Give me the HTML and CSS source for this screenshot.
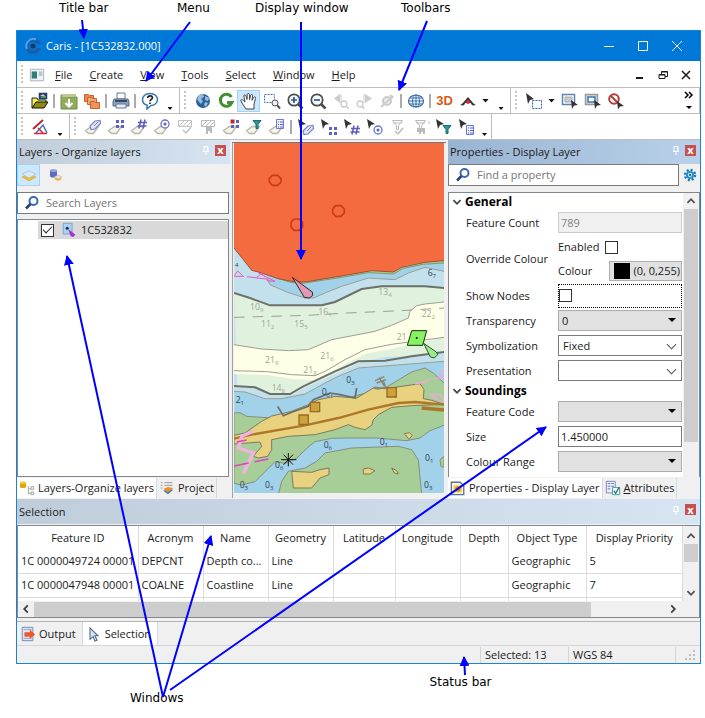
FILE: index.html
```html
<!DOCTYPE html>
<html lang="en">
<head>
    <meta charset="UTF-8">
    <meta name="viewport" content="width=device-width, initial-scale=1.0">
    <title>Caris - [1C532832.000]</title>
    <link rel="stylesheet" href="styles.css">
</head>
<body>
  <!-- icon sprite -->
  <svg class="sprite">
    <symbol id="i-logo" viewBox="0 0 18 18"><circle cx="9" cy="9" r="6" fill="none" stroke="#1c5fa6" stroke-width="4"/><path d="M3 12A7 7 0 0 1 12 2.500" fill="none" stroke="#4aa5ec" stroke-width="2"/><circle cx="9" cy="9" r="2.500" fill="#0e3c6c"/><path d="M13 7h5v4h-5z" fill="#0078d7"/></symbol>
    <symbol id="i-doc" viewBox="0 0 18 18"><path d="M1.500 2.500h15v13h-15z" fill="#eef3f4" stroke="#a3adb1"/><path d="M3 5h6v8H3z" fill="#2f7f78"/><path d="M11 5h4v5h-4z" fill="#b8c6cc"/></symbol>
    <symbol id="i-open" viewBox="0 0 18 18"><path d="M1 16V6h5l1 2h8v3" fill="#f5ee5c" stroke="#222"/><path d="M1 16l4-6h12l-4 6z" fill="#8d8b13" stroke="#111"/><path d="M8 1h8v6H8z" fill="#1736b5" stroke="#333" stroke-width=".5"/><path d="M9 4l3-2 3 3" fill="#e9e335"/><path d="M9 6h6V5l-3-1z" fill="#38a838"/></symbol>
    <symbol id="i-down" viewBox="0 0 18 18"><path d="M1 3h6l1 2h9v12H1z" fill="#91ad5c" stroke="#728b45"/><path d="M2 2h14v3H2z" fill="#b9c894"/><path d="M9 7v7M5.500 11L9 14.500 12.500 11" fill="none" stroke="#fff" stroke-width="2"/></symbol>
    <symbol id="i-folders" viewBox="0 0 18 18"><path d="M1.500 2.500h4l1 1h4v6h-9z" fill="#e98b52" stroke="#c9632c"/><path d="M4.500 5.500h4l1 1h4v6h-9z" fill="#f0a878" stroke="#c9632c"/><path d="M7.500 9.500h4l1 1h4v6h-9z" fill="#ee955d" stroke="#c9632c"/></symbol>
    <symbol id="i-print" viewBox="0 0 18 18"><path d="M5 1h8v6H5z" fill="#fff" stroke="#607894"/><path d="M2 7h14l1 3v4H1v-4z" fill="#8da2ba" stroke="#536b87"/><path d="M3 9h12" stroke="#354d69" stroke-width="2"/><path d="M4 12h10v4H4z" fill="#e6edf3" stroke="#607894"/></symbol>
    <symbol id="i-help" viewBox="0 0 18 18"><path d="M9 1.500c4.500 0 7.500 2.600 7.500 6S13.500 13.500 10 13.500L6 17v-4C3 12.500 1.500 10.300 1.500 7.500c0-3.400 3-6 7.500-6z" fill="#fff" stroke="#3878ac" stroke-width="1.500"/><path d="M6.800 6c0-3 4.600-2.800 4.600-.3C11.400 7.400 9 7.300 9 9.300M9 10.500V12" fill="none" stroke="#222" stroke-width="1.700"/></symbol>
    <symbol id="i-earth" viewBox="0 0 18 18"><circle cx="9" cy="9" r="7" fill="#2c629c"/><path d="M5 3l4-1 1 3-3 2 2 2-2 3-2-2-2-3zM11 4l4 2-1 3-3-1zM11 10l3 1-2 4-2-2z" fill="#9bbcdb"/></symbol>
    <symbol id="i-redo" viewBox="0 0 18 18"><path d="M14.500 5A6 6 0 1 0 15 10.500H10" fill="none" stroke="#3f9131" stroke-width="3"/></symbol>
    <symbol id="i-hand" viewBox="0 0 18 18"><path d="M6 17L2 11 .8 8.500c0-1.500 2-1 2.500 0L5 10 3.800 4c0-1.500 1.800-1.500 2.200 0L7 7.500 7.200 2.500c.2-1.500 2-1.500 2.200 0L9.500 7.500l1.200-4.300c.5-1.200 2-1 1.900.3L12 8.300l1.800-3c.8-1 2.200-.4 1.700 1L14 12v5z" fill="#fff" stroke="#444"/></symbol>
    <symbol id="i-zoombox" viewBox="0 0 18 18"><path d="M1.500 2.500h10v8h-10z" fill="none" stroke="#3e74b8" stroke-dasharray="2 1"/><circle cx="12" cy="11" r="3" fill="#eee" stroke="#555"/><path d="M14 13l3 3.500" stroke="#555" stroke-width="2"/></symbol>
    <symbol id="i-zoomin" viewBox="0 0 18 18"><circle cx="8" cy="8" r="5.700" fill="#f5f8fa" stroke="#4b4b4b" stroke-width="1.700"/><path d="M12 12l4.500 4.500" stroke="#4b4b4b" stroke-width="2.500"/><path d="M5 8h6M8 5v6" stroke="#285999" stroke-width="1.700"/></symbol>
    <symbol id="i-zoomout" viewBox="0 0 18 18"><circle cx="8" cy="8" r="5.700" fill="#f5f8fa" stroke="#4b4b4b" stroke-width="1.700"/><path d="M12 12l4.500 4.500" stroke="#4b4b4b" stroke-width="2.500"/><path d="M5 8h6" stroke="#285999" stroke-width="1.700"/></symbol>
    <symbol id="i-prev" viewBox="0 0 18 18"><path d="M8 2v9L2 6.500z" fill="#ccc"/><path d="M9 2v9" stroke="#ccc"/><circle cx="12" cy="12" r="3" fill="none" stroke="#ccc" stroke-width="1.300"/><path d="M14 14l3 3" stroke="#ccc" stroke-width="1.500"/></symbol>
    <symbol id="i-next" viewBox="0 0 18 18"><path d="M10 2v9l7-4.500z" fill="#ccc"/><path d="M9 2v9" stroke="#ccc"/><circle cx="5" cy="12" r="3" fill="none" stroke="#ccc" stroke-width="1.300"/><path d="M7 14l2 3" stroke="#ccc" stroke-width="1.500"/></symbol>
    <symbol id="i-cancel" viewBox="0 0 18 18"><circle cx="9" cy="9" r="4" fill="#eee" stroke="#ccc" stroke-width="2"/><path d="M3 15L15 4" stroke="#ccc" stroke-width="2" fill="none"/><path d="M12 3l3 3" stroke="#ccc" stroke-width="2"/></symbol>
    <symbol id="i-globe" viewBox="0 0 18 18"><ellipse cx="9" cy="9" rx="7.500" ry="6" fill="#fff" stroke="#356dab" stroke-width="1.200"/><ellipse cx="9" cy="9" rx="3.500" ry="6" fill="none" stroke="#356dab"/><path d="M1.500 9h15M3 6h12M3 12h12M9 3v12" stroke="#356dab"/></symbol>
    <symbol id="i-compass" viewBox="0 0 18 18"><path d="M1 13C4 12 6 8 9 5c3 3 5 7 8 8-3 1-5 0-5-2H6c0 2-2 3-5 2z" fill="#30343c"/><circle cx="9" cy="10" r="2" fill="#db2d2d"/></symbol>
    <symbol id="i-arrow" viewBox="0 0 18 18"><path d="M2 1l8 5-4 1-2 4z" fill="#333"/></symbol>
    <symbol id="i-selbox" viewBox="0 0 18 18"><path d="M1 1l8 6-4 1-2 4z" fill="#333"/><path d="M7.500 8.500h9v8h-9z" fill="none" stroke="#3464b4" stroke-dasharray="2 1"/></symbol>
    <symbol id="i-selgray" viewBox="0 0 18 18"><path d="M1.500 2.500h12v10h-12z" fill="#fff" stroke="#5a83b9" stroke-width="1.500"/><path d="M4 5h7v5H4z" fill="#ccc" stroke="#aaa"/><path d="M10 8l7 5-4 .5-2 3.500z" fill="#333"/></symbol>
    <symbol id="i-selin" viewBox="0 0 18 18"><path d="M1.500 2.500h12v10h-12z" fill="#ddd" stroke="#999" stroke-width="1.500"/><path d="M4 5h7v5H4z" fill="#fff" stroke="#3976c4" stroke-width="1.500"/><path d="M10 8l7 5-4 .5-2 3.500z" fill="#333"/></symbol>
    <symbol id="i-noselect" viewBox="0 0 18 18"><circle cx="7" cy="7" r="4.800" fill="#fff" stroke="#b33c3c" stroke-width="2"/><path d="M4 4l6 6" stroke="#b33c3c" stroke-width="2"/><path d="M10 9l7 5-4 .5-2 3z" fill="#333"/></symbol>
    <symbol id="i-measure" viewBox="0 0 18 18"><path d="M2 11L12 2" stroke="#b62834" stroke-width="2"/><path d="M5 15L12 7l4 8" fill="none" stroke="#4174ba" stroke-width="1.500"/><path d="M3 15.500h13M7 10l5 5" stroke="#d42c38" stroke-width="1.500"/></symbol>
    <!-- shared sheet under the selection icons -->
    <symbol id="sheet" viewBox="0 0 18 18"><path d="M1.500 12.500l6-4h7l-5 7h-5z" fill="#f4f3e9" stroke="#b9b7a8" stroke-width="1.300"/></symbol>
    <symbol id="tag" viewBox="0 0 18 18"><path d="M6 8l5-5 5-.5.5 3L11 11l-4 .5z" fill="#e3e6fa" stroke="#7a82c9" stroke-width="1.200"/><path d="M10 8l4-4" stroke="#7a82c9"/></symbol>
    <symbol id="dots" viewBox="0 0 18 18"><path d="M9 2h3v3H9zM14 2h3v3h-3zM9 7h3v3H9zM14 7h3v3h-3z" fill="#5f61c2"/></symbol>
    <symbol id="hash" viewBox="0 0 18 18"><path d="M11 1.500l-2 9M15 1.500l-2 9M8 4.500h9M7.500 8h9" stroke="#5a5cc0" stroke-width="1.500"/></symbol>
    <symbol id="target" viewBox="0 0 18 18"><circle cx="12" cy="6" r="4" fill="#fff" stroke="#6a73cc" stroke-width="1.300"/><circle cx="12" cy="6" r="1.500" fill="#5660c4"/></symbol>
    <symbol id="funnel" viewBox="0 0 18 18"><path d="M8 2.500h8l-3 4v4h-2v-4z" fill="#2c9598" stroke="#167075"/></symbol>
    <symbol id="list" viewBox="0 0 18 18"><path d="M8.500 1.500h7v9h-7z" fill="#edf0ff" stroke="#6b79d6"/><path d="M10 4h1M12 4h3M10 6.500h1M12 6.500h3M10 9h1M12 9h3" stroke="#5868c8"/></symbol>
    <symbol id="i-s-tag" viewBox="0 0 18 18"><use href="#sheet"/><use href="#tag"/></symbol>
    <symbol id="i-s-dots" viewBox="0 0 18 18"><use href="#sheet"/><use href="#dots"/></symbol>
    <symbol id="i-s-hash" viewBox="0 0 18 18"><use href="#sheet"/><use href="#hash"/></symbol>
    <symbol id="i-s-target" viewBox="0 0 18 18"><use href="#sheet"/><use href="#target"/></symbol>
    <symbol id="i-s-red" viewBox="0 0 18 18"><use href="#sheet"/><use href="#dots"/><path d="M8.500 1.500h4v4h-4z" fill="#bc2731"/></symbol>
    <symbol id="i-s-funnel" viewBox="0 0 18 18"><use href="#sheet"/><use href="#funnel"/></symbol>
    <symbol id="i-s-list" viewBox="0 0 18 18"><use href="#sheet"/><use href="#list"/></symbol>
    <symbol id="i-hatchcheck" viewBox="0 0 18 18"><path d="M2.500 2.500h13v6h-13zM3 8l5-5M7 8l5-5M11 8l4-4" fill="none" stroke="#c2c2c2"/><path d="M7 12l3 3 5-6" fill="none" stroke="#c2c2c2" stroke-width="1.500"/></symbol>
    <symbol id="i-hatch" viewBox="0 0 18 18"><path d="M2.500 2.500h13v6h-13zM3 8l5-5M7 8l5-5M11 8l4-4" fill="none" stroke="#bbb"/><path d="M7 9h6v6h-2v-2H9v3H7z" fill="#bbb"/></symbol>
    <symbol id="i-a-tag" viewBox="0 0 18 18"><use href="#i-arrow" x="-1"/><use href="#tag" y="5"/></symbol>
    <symbol id="i-a-dots" viewBox="0 0 18 18"><use href="#i-arrow" x="-1"/><use href="#dots" y="7"/></symbol>
    <symbol id="i-a-hash" viewBox="0 0 18 18"><use href="#i-arrow" x="-1"/><use href="#hash" y="6"/></symbol>
    <symbol id="i-a-target" viewBox="0 0 18 18"><use href="#i-arrow" x="-1"/><use href="#target" y="6"/></symbol>
    <symbol id="i-a-funnel" viewBox="0 0 18 18"><use href="#i-arrow" x="-1"/><use href="#funnel" y="5"/></symbol>
    <symbol id="i-a-list" viewBox="0 0 18 18"><use href="#i-arrow" x="-1"/><use href="#list" y="6"/></symbol>
    <symbol id="i-fcheck" viewBox="0 0 18 18"><path d="M3.500 2.500h10l-4 5v4h-2v-4zM4 5h9" fill="none" stroke="#bbb"/><path d="M6 13l3 3 5-6" fill="none" stroke="#bbb" stroke-width="1.500"/></symbol>
    <symbol id="i-fhatch" viewBox="0 0 18 18"><path d="M3.500 2.500h10l-4 5v4h-2v-4zM4 5h9M17 3v3" fill="none" stroke="#bbb"/><path d="M5 10h8v6h-2v-2H9v2H7v-2H5z" fill="#bbb"/></symbol>
    <symbol id="i-layers" viewBox="0 0 18 18"><path d="M2 11l7-3 7 3-7 4z" fill="#f1bd31" stroke="#d39b24" stroke-width=".5"/><path d="M2 8l7-3 7 3-7 4z" fill="#d9eaf5" stroke="#9fc0da" stroke-width=".7"/></symbol>
    <symbol id="i-db" viewBox="0 0 18 18"><path d="M3 4v6c0 2 7 2 7 0V4z" fill="#5a6dc2"/><ellipse cx="6.500" cy="4.500" rx="3.500" ry="1.500" fill="#94a2e1"/><path d="M7 13l4-2 4 2-4 2z" fill="#eeb72f"/><path d="M7 11l4-2 4 2-4 2z" fill="#e3e3e3" stroke="#aaa" stroke-width=".5"/></symbol>
    <symbol id="i-search" viewBox="0 0 18 18"><circle cx="10.500" cy="7" r="4" fill="#fff" stroke="#356bb2" stroke-width="2"/><path d="M7.500 10L3 14.500" stroke="#243f78" stroke-width="2.500"/></symbol>
    <symbol id="i-layer" viewBox="0 0 18 18"><path d="M2.500 1.500h10v12h-10z" fill="#a9d2f1" stroke="#6ba3cf"/><circle cx="7" cy="7" r="1.700" fill="#163159"/><path d="M8 8l8 6-2 3-3-1z" fill="#aa2dd3"/></symbol>
    <symbol id="i-tree" viewBox="0 0 18 18"><path d="M1 3v5c0 1.500 7 1.500 7 0V3c0-1.500-7-1.500-7 0z" fill="#d9a615"/><ellipse cx="4.500" cy="3" rx="3.500" ry="1.400" fill="#efc94a"/><path d="M10.500 7v9M11 10h3M11 15h3" stroke="#999" fill="none"/><path d="M13.500 7.500h3v3h-3zM13.500 13.500h3v3h-3z" fill="#fff" stroke="#999"/></symbol>
    <symbol id="i-project" viewBox="0 0 18 18"><path d="M2 3h2M6 3h9M2 6h2M6 6h9M2 9h2" stroke="#8d8d8d"/><path d="M5 12l5 4 6-5-6-1z" fill="#3978bd"/><path d="M5 10l5 4 6-5-6-1z" fill="#ef8e22"/></symbol>
    <symbol id="i-props" viewBox="0 0 18 18"><path d="M1.500 2.500h10l4 4v10h-14z" fill="#fff6d3" stroke="#5671a4" stroke-width="1.500"/><path d="M4 6h9v8H4z" fill="#f5c642"/><circle cx="9" cy="10" r="3" fill="#d29312"/></symbol>
    <symbol id="i-attr" viewBox="0 0 18 18"><path d="M1.500 1.500h10v13h-10z" fill="#eef" stroke="#7384b1"/><path d="M3 4h3M7 4h3M3 7h3M7 7h3M3 10h3" stroke="#5570ad"/><path d="M8.500 8.500h8v8h-8z" fill="#fff" stroke="#35958f"/><path d="M10 12l2 3 4-7" fill="none" stroke="#1d7a8b" stroke-width="1.500"/></symbol>
    <symbol id="i-output" viewBox="0 0 18 18"><path d="M2.500 1.500h12v15h-12z" fill="#dce7f5" stroke="#6585b8"/><path d="M4 4h9M4 14h9" stroke="#8ea5c9"/><path d="M5 7h6V4l6 5.500-6 5V12H5z" fill="#ed572d"/></symbol>
    <symbol id="i-cursor" viewBox="0 0 18 18"><path d="M4.500 2l9 9H10l2.500 5-2.500 1-2-5-3.500 3z" fill="#d7e2f2" stroke="#51698e" stroke-width="1.200"/></symbol>
    <symbol id="i-gear" viewBox="0 0 18 18"><circle cx="9" cy="9" r="6.500" fill="none" stroke="#1476b8" stroke-width="3" stroke-dasharray="2.600 2.500"/><circle cx="9" cy="9" r="4" fill="#d3ebf7" stroke="#2690cf" stroke-width="2.500"/><circle cx="9" cy="9" r="1.500" fill="#13649c"/></symbol>
    <symbol id="i-pin" viewBox="0 0 18 18"><path d="M6 8.500h6M7 8V3.500h4V8M10.500 4v4M9 9v3" fill="none" stroke="#fff"/></symbol>
    <symbol id="i-up" viewBox="0 0 18 18"><path d="M5 11l4-4 4 4" fill="none" stroke="currentColor" stroke-width="2"/></symbol>
    <symbol id="i-dn" viewBox="0 0 18 18"><path d="M5 7l4 4 4-4" fill="none" stroke="currentColor" stroke-width="2"/></symbol>
    <symbol id="i-lt" viewBox="0 0 18 18"><path d="M11 5L7 9l4 4" fill="none" stroke="currentColor" stroke-width="2"/></symbol>
    <symbol id="i-rt" viewBox="0 0 18 18"><path d="M7 5l4 4-4 4" fill="none" stroke="currentColor" stroke-width="2"/></symbol>
  </svg>

  <div class="callouts callouts-top">
    <span>Title bar</span><span>Menu</span><span>Display window</span><span>Toolbars</span>
  </div>

  <main class="window">
    <header class="title-bar">
      <svg class="icon"><use href="#i-logo"/></svg>
      <h1>Caris - [1C532832.000]</h1>
      <div class="window-btns">
        <button aria-label="Minimize"><svg viewBox="0 0 12 12"><path d="M1 6.500h10"/></svg></button>
        <button aria-label="Maximize"><svg viewBox="0 0 12 12"><path d="M1.500 1.500h9v9h-9z"/></svg></button>
        <button aria-label="Close"><svg viewBox="0 0 12 12"><path d="M1 1l10 10M11 1L1 11"/></svg></button>
      </div>
    </header>

    <nav class="menu-bar">
      <i class="grip"></i>
      <svg class="icon"><use href="#i-doc"/></svg>
      <button><u>F</u>ile</button>
      <button><u>C</u>reate</button>
      <button><u>V</u>iew</button>
      <button><u>T</u>ools</button>
      <button><u>S</u>elect</button>
      <button><u>W</u>indow</button>
      <button><u>H</u>elp</button>
      <div class="doc-btns">
        <button aria-label="Minimize document"><svg viewBox="0 0 12 12"><path d="M2 9h7" stroke-width="2"/></svg></button>
        <button aria-label="Restore document"><svg viewBox="0 0 12 12"><path d="M2 5.500h6v4H2zM2 6h6M4.500 5V2.500h6v5H8M4.500 3h6"/></svg></button>
        <button aria-label="Close document"><svg viewBox="0 0 12 12"><path d="M2 2l8 8M10 2l-8 8" stroke-width="1.500"/></svg></button>
      </div>
    </nav>

    <div class="toolbar-row">
      <div class="toolbar">
        <i class="grip"></i>
        <button class="tool" aria-label="Open"><svg class="icon"><use href="#i-open"/></svg></button>
        <i class="sep"></i>
        <button class="tool" aria-label="Import"><svg class="icon"><use href="#i-down"/></svg></button>
        <button class="tool" aria-label="Copy folders"><svg class="icon"><use href="#i-folders"/></svg></button>
        <i class="sep"></i>
        <button class="tool" aria-label="Print"><svg class="icon"><use href="#i-print"/></svg></button>
        <i class="sep"></i>
        <button class="tool" aria-label="Help"><svg class="icon"><use href="#i-help"/></svg></button>
        <button class="more" aria-label="More file tools"></button>
      </div>
      <div class="toolbar">
        <i class="grip"></i>
        <button class="tool" aria-label="Whole world"><svg class="icon"><use href="#i-earth"/></svg></button>
        <button class="tool" aria-label="Refresh"><svg class="icon"><use href="#i-redo"/></svg></button>
        <button class="tool active" aria-label="Pan"><svg class="icon"><use href="#i-hand"/></svg></button>
        <button class="tool" aria-label="Zoom area"><svg class="icon"><use href="#i-zoombox"/></svg></button>
        <button class="tool" aria-label="Zoom in"><svg class="icon"><use href="#i-zoomin"/></svg></button>
        <button class="tool" aria-label="Zoom out"><svg class="icon"><use href="#i-zoomout"/></svg></button>
        <button class="tool" aria-label="Previous view"><svg class="icon"><use href="#i-prev"/></svg></button>
        <button class="tool" aria-label="Next view"><svg class="icon"><use href="#i-next"/></svg></button>
        <button class="tool" aria-label="Stop"><svg class="icon"><use href="#i-cancel"/></svg></button>
        <i class="sep"></i>
        <button class="tool" aria-label="Projection"><svg class="icon"><use href="#i-globe"/></svg></button>
        <i class="sep"></i>
        <button class="tool three-d">3D</button>
        <button class="tool" aria-label="Compass"><svg class="icon"><use href="#i-compass"/></svg></button>
        <button class="drop" aria-label="Compass options"></button>
        <button class="more" aria-label="More view tools"></button>
      </div>
      <div class="toolbar wide">
        <i class="grip"></i>
        <button class="tool" aria-label="Select by area"><svg class="icon"><use href="#i-selbox"/></svg></button>
        <button class="drop" aria-label="Select options"></button>
        <button class="tool" aria-label="Select visible"><svg class="icon"><use href="#i-selgray"/></svg></button>
        <button class="tool" aria-label="Select inside"><svg class="icon"><use href="#i-selin"/></svg></button>
        <button class="tool" aria-label="Clear selection"><svg class="icon"><use href="#i-noselect"/></svg></button>
        <button class="overflow" aria-label="More select tools"><svg viewBox="0 0 12 20"><path d="M2 1l3 3-3 3M6 1l3 3-3 3" fill="none" stroke="#000" stroke-width="1.500"/><path d="M3 15h6l-3 3z"/></svg></button>
      </div>
    </div>

    <div class="toolbar-row">
      <div class="toolbar">
        <i class="grip"></i>
        <button class="tool" aria-label="Measure"><svg class="icon"><use href="#i-measure"/></svg></button>
        <button class="more" aria-label="More measure tools"></button>
      </div>
      <div class="toolbar">
        <i class="grip"></i>
        <button class="tool" aria-label="Select by name"><svg class="icon"><use href="#i-s-tag"/></svg></button>
        <button class="tool" aria-label="Select by type"><svg class="icon"><use href="#i-s-dots"/></svg></button>
        <button class="tool" aria-label="Select by number"><svg class="icon"><use href="#i-s-hash"/></svg></button>
        <button class="tool" aria-label="Select by point"><svg class="icon"><use href="#i-s-target"/></svg></button>
        <button class="tool" aria-label="Accept area"><svg class="icon"><use href="#i-hatchcheck"/></svg></button>
        <button class="tool" aria-label="Reject area"><svg class="icon"><use href="#i-hatch"/></svg></button>
        <button class="tool" aria-label="Select by group"><svg class="icon"><use href="#i-s-red"/></svg></button>
        <button class="tool" aria-label="Select by filter"><svg class="icon"><use href="#i-s-funnel"/></svg></button>
        <button class="tool" aria-label="Select by list"><svg class="icon"><use href="#i-s-list"/></svg></button>
        <i class="sep"></i>
        <button class="tool" aria-label="Pick name"><svg class="icon"><use href="#i-a-tag"/></svg></button>
        <button class="tool" aria-label="Pick type"><svg class="icon"><use href="#i-a-dots"/></svg></button>
        <button class="tool" aria-label="Pick number"><svg class="icon"><use href="#i-a-hash"/></svg></button>
        <button class="tool" aria-label="Pick point"><svg class="icon"><use href="#i-a-target"/></svg></button>
        <button class="tool" aria-label="Accept filter"><svg class="icon"><use href="#i-fcheck"/></svg></button>
        <button class="tool" aria-label="Reject filter"><svg class="icon"><use href="#i-fhatch"/></svg></button>
        <button class="tool" aria-label="Pick filter"><svg class="icon"><use href="#i-a-funnel"/></svg></button>
        <button class="tool" aria-label="Pick list"><svg class="icon"><use href="#i-a-list"/></svg></button>
        <button class="drop low" aria-label="More selection tools"></button>
      </div>
    </div>

    <div class="workspace">
      <section class="panel layers">
        <div class="panel-head">
          <h2>Layers - Organize layers</h2>
          <button class="pin" aria-label="Pin layers"><svg class="icon"><use href="#i-pin"/></svg></button>
          <button class="close" aria-label="Close layers">x</button>
        </div>
        <div class="layer-tools">
          <button class="tool active" aria-label="Organize layers"><svg class="icon"><use href="#i-layers"/></svg></button>
          <button class="tool" aria-label="Organize sources"><svg class="icon"><use href="#i-db"/></svg></button>
        </div>
        <div class="search">
          <svg class="icon"><use href="#i-search"/></svg>
          <input type="text" placeholder="Search Layers" aria-label="Search Layers">
        </div>
        <div class="tree">
          <label class="tree-row">
            <input type="checkbox" class="check" checked>
            <svg class="icon"><use href="#i-layer"/></svg>
            <span>1C532832</span>
          </label>
        </div>
        <div class="tabs">
          <button class="tab on"><svg class="icon"><use href="#i-tree"/></svg>Layers-Organize layers</button>
          <button class="tab"><svg class="icon"><use href="#i-project"/></svg>Project</button>
        </div>
      </section>

      <div class="chart-frame">
      <svg class="chart" viewBox="27 15 630 1050" preserveAspectRatio="xMidYMin slice">
        <path d="M27 15h630v1050H27z" fill="#c3e1ed"/>
        <!-- shallow water under the coast -->
        <path d="M125 410l10 30 50 22 55 18h25l35-15 50-20 80-25 80 5 40-20 50-17 57 12v-35H160z" fill="#a2d1ea"/>
        <path d="M125 420l10 20 50 22 55 18h25l35-15 50-20 80-25 80 5 40-20 50-17 57 12" class="line"/>
        <path d="M155 420l45 14 40 1 110-17 80-14 75 4 30-17 60-12 62-4v-12H520l-80 25-210 35z" fill="#a8cd91" stroke="#83976e" stroke-width="3"/>
        <path d="M27 15h630v353l-57 5-50 9-20 6-25 14-65-4-80 14-80 13-40 7-40-2-40-8-60-20-20-5-25-32-28-35z" fill="#f46b40"/>
        <path d="M27 330l28 35 25 32 20 5 60 20 40 8 40 2 120-20 80-14 65 4 25-14 70-15 57-5" fill="none" stroke="#9b5333" stroke-width="3"/>
        <!-- channel -->
        <path d="M27 465l48 15 60 22h155l40-10 80-39 60-8h130l57 5v192l-97 13-80 2-70 14-165 75-40 23h-60l-45-20-63-5z" fill="#e0f2de"/>
        <path d="M27 620l83 13 80 5 60-3 70-30 130-25 50-18 50-22 5-20 20-17 25-5 57-6v106l-157 34-80 16-60 30-60 35-30 13-70-3-73-12-100-3z" fill="#feffe6"/>
        <path d="M27 620l83 13 80 5 60-3 70-30 130-25 50-18 50-22 5-20 20-17 25-5 57-6M27 698l100 3 73 9 70 3 30-13 60-35 60-30 80-16 157-21" class="line"/>
        <path d="M27 538l220-6 120-7 160-7 130-8" class="line" stroke-dasharray="32 24"/>
        <path d="M27 760l33 2 60 20h50l70-14 60-33 40-20 60-25 257-20v400H27z" fill="#a2d1ea"/>
        <path d="M27 760l33 2 60 20h50l70-14 60-33 40-20 60-25 257-20" class="line"/>
        <path d="M27 465l48 15 60 22h155l40-10 80-39 60-8h130l57 5M27 744l63 4 45 20h60l40-23 95-45 70-30 80-2 80-13 97-13" fill="none" stroke="#6d7068" stroke-width="6"/>
        <!-- land -->
        <g fill="#a7ce98" stroke="#858f7f" stroke-width="3">
          <path d="M27 825l18-1 20 11 75 5 340-90 80-48 40-12 25 15 37 35v120l-47 18-30 22-40 8-90-8h-85l-50 1-50 10-25 20-30 30-35 15-30-5-30 30-30 30-40 10-23-5z"/>
          <path d="M300 945l80-15 140-5 40 10 20 30 10 105H160l10-40 20-30 50-10 35-20z"/>
          <path d="M657 955l-12 10 3 20 9 3z"/>
        </g>
        <g fill="#e8d17f" stroke="#7e7a5b" stroke-width="3">
          <path d="M27 892l33-7 50-35 30-16 60-14 50-20 30-15 50-10 65 5 55-33 30 5 50-7 55-8 12 18-2 27 25 5 37 12-97 4-60 5-40 22-15 15-5 17-20 13-30-7-20-8-40 15-60 15-80 5-50 10v30l-12 20-28 5-15-5 25-30-5-13-78 6z"/>
          <path d="M200 1000l60 3 25-8 27-5v20l-27 10-25 30h-55zM415 993l15-3 20 8-15 10h-20zM500 990l15 8 5 10-12-3zM538 887l15-3 9 8-10 12z"/>
        </g>
        <path d="M27 902l53-12 160-28 100-22 90-25 90-20 50-3 87 8" fill="none" stroke="#ad7728" stroke-width="7"/>
        <path d="M590 810l67 6" stroke="#ad7728" stroke-width="10"/>
        <path d="M158 805l17 28 25-10 50-18 15-20 50-20 30 5 45 10 5-30" fill="none" stroke="#6b6d69" stroke-width="5"/>
        <path d="M320 765v15M445 750l15 3 22-6-8-22M450 728l28-12M455 735l28-10M462 718l15 25" fill="none" stroke="#8a8468" stroke-width="4"/>
        <path d="M256 793h28v28h-28zM222 831h28v28h-28zM486 749h28v28h-28z" fill="#cda23b" stroke="#9a6a21" stroke-width="4"/>
        <!-- pipelines and restricted areas -->
        <path d="M85 880l-35 15-10 35 45 15-30 62" fill="none" stroke="#f2b3e2" stroke-width="10"/>
        <path d="M27 984l103-21M35 912l30-6" stroke="#df43bd" stroke-width="5" stroke-dasharray="45 18"/>
        <path d="M570 738l45-10M628 722l29-4M645 700h14v14h-14zM615 770l30 20 12-2M620 770h25l12 15" fill="none" stroke="#f1a6dc" stroke-width="4"/>
        <path d="M27 415h30M28 413l10-14 15 14M66 416l64 8M95 418l15-12 10 12M100 405l50 25-25-2" fill="none" stroke="#e957c5" stroke-width="3"/>
        <g fill="none" stroke="#ce3b12" stroke-width="5">
          <path d="M142 112h16l10 10v10l-10 10h-16l-9-10v-10zM207 243h16l10 10v14l-10 10h-16l-9-10v-14zM332 203h16l10 10v12l-10 10h-16l-9-10v-12z"/>
        </g>
        <path d="M202 418l60 44 1 10-10 8-15-2z" fill="#e29ab2" stroke="#302a2c" stroke-width="3"/>
        <path d="M560 578h45l-12 44h-46z" fill="#86f363" stroke="#17320f" stroke-width="3"/><circle cx="575" cy="600" r="3"/>
        <path d="M596 616l38 26 4 8-10 10-12-3z" fill="#99ed89" stroke="#32512b" stroke-width="3"/>
        <path d="M168 965h46M190 945v40M176 950l28 30M204 950l-28 30" stroke="#111" stroke-width="3"/>
        <g class="depth light">
          <text x="75" y="515">10<tspan>9</tspan></text><text x="280" y="532">16<tspan>1</tspan></text>
          <text x="460" y="472">13<tspan>4</tspan></text><text x="590" y="536">22<tspan>2</tspan></text>
          <text x="108" y="566">11<tspan>2</tspan></text><text x="208" y="566">15<tspan>5</tspan></text>
          <text x="120" y="676">21<tspan>9</tspan></text><text x="286" y="664">21<tspan>6</tspan></text>
          <text x="235" y="706">21<tspan>8</tspan></text><text x="140" y="758">14<tspan>8</tspan></text>
          <text x="515" y="606">21</text>
        </g>
        <g class="depth">
          <text x="30" y="382"><tspan>4</tspan></text><text x="608" y="414">6<tspan>7</tspan></text>
          <text x="32" y="796">2<tspan>1</tspan></text><text x="364" y="735">0<tspan>3</tspan></text>
          <text x="290" y="770">0<tspan>6</tspan></text><text x="296" y="930">0<tspan>6</tspan></text>
          <text x="464" y="920">0<tspan>1</tspan></text><text x="600" y="970">0<tspan>1</tspan></text>
          <text x="150" y="990">0<tspan>6</tspan></text><text x="44" y="1050">0<tspan>3</tspan></text>
          <text x="120" y="1050">0<tspan>3</tspan></text><text x="597" y="1050">0<tspan>3</tspan></text>
        </g>
      </svg>
      </div>

      <section class="panel properties">
        <div class="panel-head current">
          <h2>Properties - Display Layer</h2>
          <button class="pin" aria-label="Pin properties"><svg class="icon"><use href="#i-pin"/></svg></button>
          <button class="close" aria-label="Close properties">x</button>
        </div>
        <div class="find-row">
          <div class="search">
            <svg class="icon"><use href="#i-search"/></svg>
            <input type="text" placeholder="Find a property" aria-label="Find a property">
          </div>
          <button class="gear" aria-label="Property settings"><svg class="icon"><use href="#i-gear"/></svg></button>
        </div>
        <div class="prop-box">
          <div class="prop-list">
            <h3><svg class="icon"><use href="#i-dn"/></svg>General</h3>
            <div class="prop"><label for="count">Feature Count</label><input id="count" class="field" type="text" value="789" disabled></div>
            <div class="prop tall">
              <span>Override Colour</span>
              <div class="override">
                <div class="line-row"><label for="enabled">Enabled</label><input id="enabled" type="checkbox" class="check"></div>
                <div class="line-row"><span>Colour</span><button class="colour"><i class="swatch"></i>(0, 0,255)</button></div>
              </div>
            </div>
            <div class="prop"><label for="nodes">Show Nodes</label><div class="focus"><input id="nodes" type="checkbox" class="check"></div></div>
            <div class="prop"><label for="transp">Transparency</label><div class="select gray"><select id="transp"><option>0</option></select></div></div>
            <div class="prop"><label for="symb">Symbolization</label><div class="select"><select id="symb"><option>Fixed</option></select></div></div>
            <div class="prop"><label for="pres">Presentation</label><div class="select"><select id="pres"><option></option></select></div></div>
            <h3><svg class="icon"><use href="#i-dn"/></svg>Soundings</h3>
            <div class="prop"><label for="code">Feature Code</label><div class="select gray"><select id="code"><option></option></select></div></div>
            <div class="prop"><label for="size">Size</label><input id="size" class="field" type="text" value="1.450000"></div>
            <div class="prop"><label for="range">Colour Range</label><div class="select gray"><select id="range"><option></option></select></div></div>
          </div>
          <div class="vscroll"><svg class="icon"><use href="#i-up"/></svg><i class="thumb"></i></div>
        </div>
        <div class="tabs">
          <button class="tab on"><svg class="icon"><use href="#i-props"/></svg>Properties - Display Layer</button>
          <button class="tab"><svg class="icon"><use href="#i-attr"/></svg><span><u>A</u>ttributes</span></button>
        </div>
      </section>
    </div>

    <section class="selection">
      <div class="panel-head">
        <h2>Selection</h2>
        <button class="pin" aria-label="Pin selection"><svg class="icon"><use href="#i-pin"/></svg></button>
        <button class="close" aria-label="Close selection">x</button>
      </div>
      <div class="grid-box">
        <div class="grid-main">
          <table>
            <colgroup><col class="c-id"><col class="c-mid"><col class="c-mid"><col class="c-mid"><col class="c-lat"><col class="c-mid"><col class="c-depth"><col class="c-type"><col></colgroup>
            <thead>
              <tr><th>Feature ID</th><th>Acronym</th><th>Name</th><th>Geometry</th><th>Latitude</th><th>Longitude</th><th>Depth</th><th>Object Type</th><th>Display Priority</th></tr>
            </thead>
            <tbody>
              <tr><td>1C 0000049724 00001</td><td>DEPCNT</td><td>Depth co...</td><td>Line</td><td></td><td></td><td></td><td>Geographic</td><td>5</td></tr>
              <tr><td>1C 0000047948 00001</td><td>COALNE</td><td>Coastline</td><td>Line</td><td></td><td></td><td></td><td>Geographic</td><td>7</td></tr>
              <tr class="cut"><td></td><td></td><td></td><td></td><td></td><td></td><td></td><td></td><td></td></tr>
            </tbody>
          </table>
          <div class="vscroll"><svg class="icon"><use href="#i-up"/></svg><i class="thumb"></i><svg class="icon"><use href="#i-dn"/></svg></div>
        </div>
        <div class="hscroll"><svg class="icon"><use href="#i-lt"/></svg><i class="thumb"></i><svg class="icon"><use href="#i-rt"/></svg></div>
      </div>
      <div class="tabs bottom-tabs">
        <button class="tab"><svg class="icon"><use href="#i-output"/></svg>Output</button>
        <button class="tab on"><svg class="icon"><use href="#i-cursor"/></svg>Selection</button>
      </div>
    </section>

    <footer class="status-bar">
      <span>Selected: 13</span>
      <span>WGS 84</span>
      <svg class="size-grip" viewBox="0 0 12 12"><path d="M9 1h2v2H9zM5 5h2v2H5zM9 5h2v2H9zM1 9h2v2H1zM5 9h2v2H5zM9 9h2v2H9z" fill="#bfbfbf"/></svg>
    </footer>
  </main>

  <div class="callouts callouts-bottom">
    <span class="windows-label">Windows</span><span>Status bar</span>
  </div>

  <!-- pointer lines drawn over the window -->
  <svg class="arrows" width="705" height="718">
    <defs>
      <marker id="head" viewBox="0 0 10 10" refX="9" refY="5" markerWidth="10" markerHeight="10" markerUnits="userSpaceOnUse" orient="auto"><path d="M0 0l10 5-10 5z" fill="#00f"/></marker>
    </defs>
    <g stroke="#00f" stroke-width="2">
      <path d="M82 20l2 18" marker-end="url(#head)"/>
      <path d="M190 22l-44 59" marker-end="url(#head)"/>
      <path d="M301 22v237" marker-end="url(#head)"/>
      <path d="M427 21l-28 69" marker-end="url(#head)"/>
      <path d="M163 697L67 256" marker-end="url(#head)"/>
      <path d="M163 697l48-161" marker-end="url(#head)"/>
      <path d="M170 690l376-263" marker-end="url(#head)"/>
      <path d="M465 675l-1-18" marker-end="url(#head)"/>
    </g>
  </svg>
</body>
</html>
```
FILE: styles.css
```css
*{
  margin: 0;
  padding: 0;
  box-sizing: border-box;
}

body{
  position: relative;
  background: #fff;
  color: #1a1a1a;
  font-family: "Open Sans", "Noto Sans", sans-serif;
  font-size: 11px;
  line-height: 16px;
}

button, input, select{
  font: inherit;
  color: inherit;
  background: none;
  border: none;
}

h1, h2{
  font-size: 11px;
  font-weight: 400;
}

.sprite{
  display: none;
}

.icon{
  width: 18px;
  height: 18px;
  flex: none;
}

/* callouts */

.callouts{
  color: #000;
  font-family: "DejaVu Sans", sans-serif;
  font-size: 12px;
}

.callouts-top{
  display: grid;
  grid-template-columns: 118px 78px 146px auto;
  height: 30px;
  padding-left: 59px;
}

.callouts-bottom{
  display: flex;
  align-items: flex-start;
  gap: 246px;
  padding: 10px 0 0 130px;
}

.windows-label{
  padding-top: 16px;
}

.arrows{
  position: absolute;
  top: 0;
  left: 0;
  pointer-events: none;
}

/* window */

.window{
  margin: 0 4px 0 16px;
  border: 1px solid #1883d7;
  background: #f0f0f0;
}

.title-bar{
  display: flex;
  align-items: center;
  gap: 4px;
  height: 30px;
  padding: 0 17px 0 7px;
  background: #0078d7;
  color: #fff;
}

.window-btns{
  display: flex;
  gap: 22px;
  margin-left: auto;
}

.window-btns svg, .doc-btns svg{
  display: block;
  width: 12px;
  height: 12px;
  fill: none;
  stroke: currentColor;
}

.menu-bar{
  display: flex;
  align-items: center;
  gap: 17px;
  height: 27px;
  padding: 1px 8px 0 4px;
  background: #fff;
  border-bottom: 1px solid #bdbdbd;
}

.menu-bar .icon{
  width: 16px;
  margin: 0 -7px 0 -11px;
}

.doc-btns{
  display: flex;
  gap: 11px;
  margin-left: auto;
}

.grip{
  flex: none;
  width: 2px;
  height: 19px;
  background: repeating-linear-gradient(#c6c6c6 0 2px, transparent 2px 4px);
}

.window-btns button{
  width: 12px;
}

.toolbar-row{
  display: flex;
  height: 26px;
  background: #fff;
  border-bottom: 1px solid #bdbdbd;
}

.toolbar{
  display: flex;
  align-items: center;
  padding-left: 4px;
  border-right: 1px solid #bdbdbd;
}

.toolbar .grip{
  margin-right: 5px;
}

.toolbar.wide{
  flex: 1;
}

.tool{
  display: flex;
  align-items: center;
  justify-content: center;
  width: 23px;
  height: 22px;
}

.tool.active{
  background: #cce8ff;
  border: 1px solid #a6d3f5;
}

.three-d{
  color: #d95b15;
  font-family: "Liberation Sans", sans-serif;
  font-size: 13px;
  font-weight: 700;
}

.sep{
  width: 2px;
  height: 14px;
  margin: 0 2px;
  background: #ababab;
}

.drop, .more{
  width: 13px;
  height: 22px;
}

.more{
  width: 18px;
}

.drop::after, .more::after{
  content: "";
  display: block;
  margin: 0 auto;
  width: 7px;
  height: 4px;
  background: #111;
  clip-path: polygon(0 0, 100% 0, 50% 100%);
}

.more::after, .drop.low::after{
  width: 5px;
  height: 3px;
  margin-top: 16px;
}

.overflow{
  width: 12px;
  height: 20px;
  margin: 0 4px 0 auto;
}

/* panels */

.workspace{
  display: flex;
}

.panel{
  display: flex;
  flex-direction: column;
}

.layers{
  width: 213px;
}

.properties{
  width: 252px;
}

.panel-head{
  display: flex;
  align-items: center;
  height: 24px;
  padding: 0 3px 0 2px;
  background: linear-gradient(90deg, #bfcddb, #d7e4f2);
}

.panel-head.current{
  background: linear-gradient(90deg, #99b4d1, #b9d1ea);
}

.panel-head h2{
  flex: 1;
}

.pin{
  width: 18px;
  height: 18px;
}

.close{
  width: 11px;
  height: 11px;
  margin: 0 1px 4px 0;
  background: #c75050;
  color: #fff;
  font-weight: 700;
  line-height: 8px;
}

.layer-tools{
  display: flex;
  height: 28px;
}

.layer-tools .tool{
  width: 23px;
}

.layer-tools .tool + .tool{
  margin-left: 4px;
}

.search{
  display: flex;
  align-items: center;
  height: 22px;
  border: 1px solid #7a7a7a;
  background: #fff;
}

.search .icon{
  margin: 0 5px;
}

.search input{
  flex: 1;
  min-width: 0;
}

.search input::placeholder{
  color: #757575;
}

.layers .search{
  margin-right: 1px;
}

.tree{
  flex: 1;
  margin: 5px 1px 0 0;
  padding-top: 1px;
  background: #fff;
  border: 1px solid #828790;
}

.tree-row{
  display: flex;
  align-items: center;
  gap: 4px;
  height: 18px;
  margin-left: 20px;
  padding-left: 3px;
  background: #d9d9d9;
}

.tree-row .icon{
  width: 16px;
  height: 16px;
  margin-left: 3px;
}

.check{
  display: grid;
  place-items: center;
  appearance: none;
  width: 13px;
  height: 13px;
  border: 1px solid #333;
  background: #fff;
}

.check:checked::before{
  content: "";
  width: 8px;
  height: 4px;
  border: solid #222;
  border-width: 0 0 1px 1px;
  transform: rotate(-45deg);
  margin-bottom: 3px;
}

.tabs{
  display: flex;
  height: 20px;
  margin-top: 1px;
}

.tab{
  display: flex;
  align-items: center;
  gap: 3px;
  padding: 0 2px;
  white-space: nowrap;
  border-right: 1px solid #d9d9d9;
}

.tab.on{
  background: #fff;
}

.tab .icon{
  width: 16px;
  height: 16px;
}

.chart-frame{
  flex: 1;
  min-width: 0;
  margin: 2px 2px 0;
  padding: 0 2px 0 1px;
  border-left: 1px solid #a0a0a0;
  border-top: 1px solid #777;
}

.chart{
  display: block;
  width: 100%;
}

.line{
  fill: none;
  stroke: #9b9f92;
  stroke-width: 3px;
}

.depth{
  fill: #2b4450;
  font-size: 26px;
}

.depth tspan{
  font-size: 18px;
  baseline-shift: -5px;
}

.light{
  fill: #a1a598;
}

/* properties */

.find-row{
  display: flex;
}

.find-row .search{
  flex: 1;
}

.gear{
  width: 21px;
}

.gear .icon{
  display: block;
  width: 14px;
  height: 14px;
  margin: 0 auto;
}

.prop-box{
  display: flex;
  height: 285px;
  margin-top: 6px;
  background: #fff;
  border: 1px solid #828790;
  border-bottom: none;
}

.prop-list{
  flex: 1;
  padding-top: 1px;
}

.prop-list h3{
  display: flex;
  align-items: center;
  height: 16px;
  color: #000;
  font-size: 12px;
  font-weight: 700;
}

.prop-list h3 .icon{
  width: 16px;
  height: 16px;
  color: #444;
}

.prop{
  display: grid;
  grid-template-columns: 92px 1fr;
  align-items: center;
  height: 25px;
  padding: 0 1px 0 17px;
}

.prop.tall{
  height: 48px;
}

.field, .select{
  width: 100%;
  height: 21px;
  border: 1px solid #7a7a7a;
  background: #fff;
}

.field{
  padding: 0 2px;
}

.field:disabled{
  background: #f0f0f0;
  border-color: #ccc;
  color: #838383;
}

.line-row{
  display: flex;
  align-items: center;
  height: 24px;
  gap: 6px;
}

.line-row .colour{
  display: flex;
  align-items: center;
  gap: 4px;
  height: 20px;
  margin-left: auto;
  padding: 0 1px 0 4px;
  background: #e1e1e1;
  border: 1px solid #adadad;
}

.swatch{
  width: 16px;
  height: 16px;
  background: #000;
}

.focus{
  display: flex;
  align-items: center;
  height: 24px;
  border: 1px dotted #000;
}

.select{
  position: relative;
}

.select select{
  width: 100%;
  height: 100%;
  padding-left: 4px;
  appearance: none;
}

.select::after{
  content: "";
  position: absolute;
  top: 5px;
  right: 6px;
  width: 6px;
  height: 6px;
  border: solid #555;
  border-width: 0 1px 1px 0;
  transform: rotate(45deg);
  pointer-events: none;
}

.select.gray{
  background: #e1e1e1;
  border-color: #adadad;
}

.select.gray select{
  padding-left: 3px;
}

.select.gray::after{
  top: 7px;
  right: 5px;
  width: 8px;
  height: 4px;
  border: none;
  background: #000;
  clip-path: polygon(0 0, 100% 0, 50% 100%);
  transform: none;
}

.vscroll{
  display: flex;
  flex-direction: column;
  align-items: center;
  width: 16px;
  background: #f0f0f0;
  color: #505050;
}

.vscroll .icon, .hscroll .icon{
  width: 16px;
  height: 16px;
}

.vscroll .thumb{
  width: 14px;
  height: 82%;
  background: #cdcdcd;
}

/* selection */

.selection{
  padding-top: 1px;
}

.selection .panel-head{
  height: 25px;
}

.grid-box{
  margin-top: 1px;
  background: #fff;
  border: 1px solid #828790;
}

.grid-main{
  display: flex;
}

table{
  flex: 1;
  table-layout: fixed;
  width: 100%;
  border-collapse: collapse;
}

th, td{
  height: 24px;
  padding: 0 3px;
  border-right: 1px solid #dcdcdc;
  border-bottom: 1px solid #dcdcdc;
  font-weight: 400;
  text-align: left;
  white-space: nowrap;
}

th{
  height: 23px;
  padding: 0;
  border-bottom: none;
  text-align: center;
}

.cut td{
  height: 4px;
  border-bottom: none;
}

.c-id{ width: 120px; }
.c-mid{ width: 65px; }
.c-lat{ width: 62px; }
.c-depth{ width: 48px; }
.c-type{ width: 78px; }

.grid-main .icon{
  margin-top: 2px;
}

.grid-main .thumb{
  height: 18px;
}

.grid-main .icon:last-child{
  margin-top: auto;
}

.hscroll{
  display: flex;
  align-items: center;
  height: 16px;
  padding-right: 18px;
  background: #f0f0f0;
  color: #404040;
}

.hscroll .thumb{
  width: 84%;
  height: 15px;
  background: #cdcdcd;
}

.hscroll .icon:last-child{
  margin-left: auto;
}

.bottom-tabs{
  height: 24px;
  margin-top: 3px;
  border-top: 1px solid #b5b5b5;
}

.bottom-tabs .tab{
  gap: 3px;
  padding: 0 6px 0 3px;
}

.status-bar{
  display: flex;
  justify-content: flex-end;
  align-items: center;
  height: 18px;
  border-top: 1px solid #d5d5d5;
}

.status-bar span{
  width: 88px;
  padding-left: 4px;
  border-left: 1px solid #d5d5d5;
}

.status-bar span + span{
  width: 108px;
  border-right: 1px solid #d5d5d5;
}

.size-grip{
  width: 12px;
  height: 12px;
  margin: 0 4px 0 8px;
}
```
